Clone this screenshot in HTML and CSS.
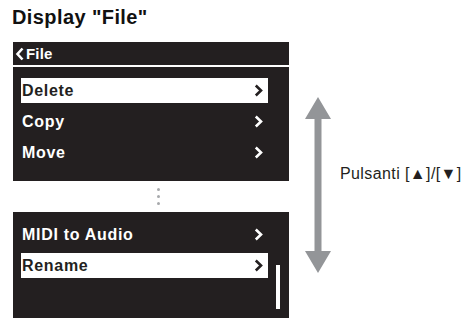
FILE: index.html
```html
<!DOCTYPE html>
<html>
<head>
<meta charset="utf-8">
<link rel="stylesheet" href="styles.css">
</head>
<body>
<h1 class="title">Display "File"</h1>
<div class="main">
  <div class="screens">
    <div class="screen screen-top">
      <div class="header">
        <svg class="back" width="9" height="14" viewBox="0 0 9 14"><polyline points="7.5,1.5 2.5,7 7.5,12.5" fill="none" stroke="#fff" stroke-width="2.6"/></svg>
        <span>File</span>
      </div>
      <div class="list list-a">
        <div class="row sel"><span>Delete</span><svg class="chev" width="9" height="13" viewBox="0 0 9 13"><polyline points="1.8,1.5 7,6.5 1.8,11.5" fill="none" stroke="#231f20" stroke-width="2.6"/></svg></div>
        <div class="row"><span>Copy</span><svg class="chev" width="9" height="13" viewBox="0 0 9 13"><polyline points="1.8,1.5 7,6.5 1.8,11.5" fill="none" stroke="#fff" stroke-width="2.6"/></svg></div>
        <div class="row"><span>Move</span><svg class="chev" width="9" height="13" viewBox="0 0 9 13"><polyline points="1.8,1.5 7,6.5 1.8,11.5" fill="none" stroke="#fff" stroke-width="2.6"/></svg></div>
      </div>
    </div>
    <div class="dots"><i></i><i></i><i></i></div>
    <div class="screen screen-bottom">
      <div class="list list-b">
        <div class="row"><span>MIDI to Audio</span><svg class="chev" width="9" height="13" viewBox="0 0 9 13"><polyline points="1.8,1.5 7,6.5 1.8,11.5" fill="none" stroke="#fff" stroke-width="2.6"/></svg></div>
        <div class="row sel"><span>Rename</span><svg class="chev" width="9" height="13" viewBox="0 0 9 13"><polyline points="1.8,1.5 7,6.5 1.8,11.5" fill="none" stroke="#231f20" stroke-width="2.6"/></svg></div>
      </div>
      <div class="scrollbar"></div>
    </div>
  </div>
  <div class="annot">
    <svg class="arrow" width="26" height="176" viewBox="0 0 26 176"><polygon points="13,0 26,22 16.5,22 16.5,154 26,154 13,176 0,154 9.5,154 9.5,22 0,22" fill="#939598"/></svg>
    <span class="label">Pulsanti [▲]/[▼]</span>
  </div>
</div>
</body>
</html>
```
FILE: styles.css
```css
html, body {
  margin: 0;
  padding: 0;
  background: #fff;
}
body {
  font-family: "Liberation Sans", Arial, sans-serif;
  color: #231f20;
}
.title {
  margin: 0;
  padding: 6px 0 0 12px;
  font-size: 20px;
  font-weight: bold;
  line-height: 23px;
  height: 35px;
  box-sizing: border-box;
  letter-spacing: 0.4px;
  color: #111;
}
.main {
  display: flex;
  align-items: flex-start;
  margin-top: 7px;
}
.screens {
  margin-left: 13px;
  width: 276px;
  display: flex;
  flex-direction: column;
}
.screen {
  color: #fff;
}
.screen-top {
  display: flex;
  flex-direction: column;
  gap: 2px;
}
.header {
  background: #231f20;
  height: 23px;
  display: flex;
  align-items: center;
  gap: 2px;
  padding-left: 2px;
  font-weight: bold;
  font-size: 15px;
  letter-spacing: 0.2px;
}
.list {
  background: #231f20;
  display: flex;
  flex-direction: column;
  gap: 6px;
  padding-left: 8px;
  box-sizing: border-box;
}
.list-a {
  height: 114px;
  padding-top: 11px;
}
.screen-bottom {
  position: relative;
}
.list-b {
  height: 106px;
  padding-top: 10px;
}
.row {
  width: 247px;
  height: 25px;
  box-sizing: border-box;
  display: flex;
  align-items: center;
  justify-content: space-between;
  padding: 0 5px 0 1px;
  font-weight: bold;
  font-size: 16px;
  letter-spacing: 0.7px;
}
.row.sel {
  background: #fff;
  color: #231f20;
}
.dots {
  height: 31px;
  display: flex;
  flex-direction: column;
  align-items: center;
  justify-content: center;
  gap: 4px;
  padding-left: 14px;
  box-sizing: border-box;
}
.dots i {
  display: block;
  width: 3px;
  height: 3px;
  border-radius: 50%;
  background: #a7a9ac;
}
.scrollbar {
  position: absolute;
  left: 263px;
  top: 53px;
  width: 4px;
  height: 44px;
  background: #fff;
}
.annot {
  display: flex;
  align-items: center;
  margin-left: 16px;
  margin-top: 55px;
}
.arrow {
  display: block;
}
.label {
  margin-left: 9px;
  margin-bottom: 22px;
  font-size: 16px;
  letter-spacing: 0.4px;
  color: #231f20;
  white-space: nowrap;
}
```
